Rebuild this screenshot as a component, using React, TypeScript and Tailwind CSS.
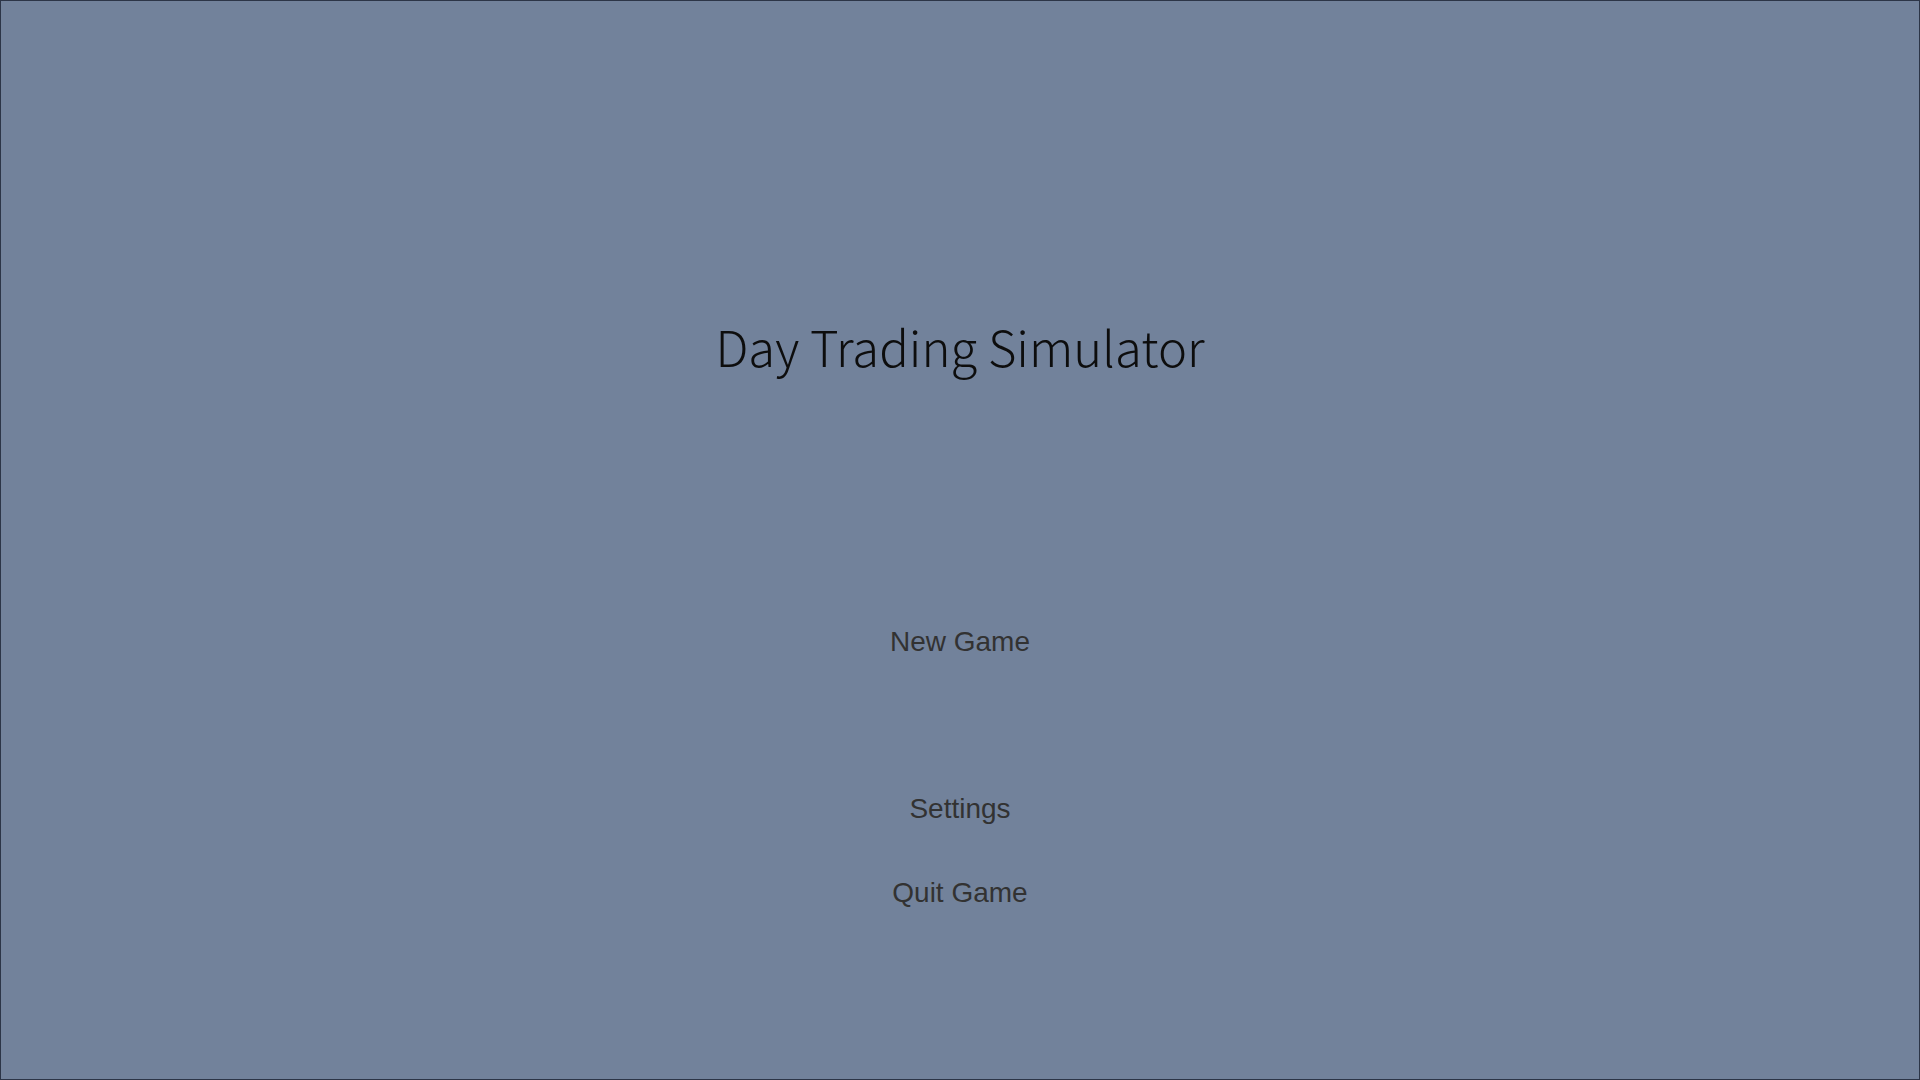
export default function App() {
  return (
    <div className="w-[1920px] h-[1080px] bg-[#72829b] border border-[#2c3547] flex flex-col items-center overflow-hidden">
      <div
        className="mt-[315px] h-[60px] leading-[60px] text-[49px] font-light text-[#0d0d0d]"
        style={{ fontFamily: '"Noto Sans CJK KR", "Noto Sans", sans-serif' }}
      >
        Day Trading Simulator
      </div>
      <div
        className="flex flex-col items-center text-[28px] text-[#323232]"
        style={{ fontFamily: '"Liberation Sans", Arial, sans-serif' }}
      >
        <div className="mt-[246px] h-[40px] leading-[40px]">New Game</div>
        <div className="mt-[127px] h-[40px] leading-[40px]">Settings</div>
        <div className="mt-[44px] h-[40px] leading-[40px]">Quit Game</div>
      </div>
    </div>
  );
}
